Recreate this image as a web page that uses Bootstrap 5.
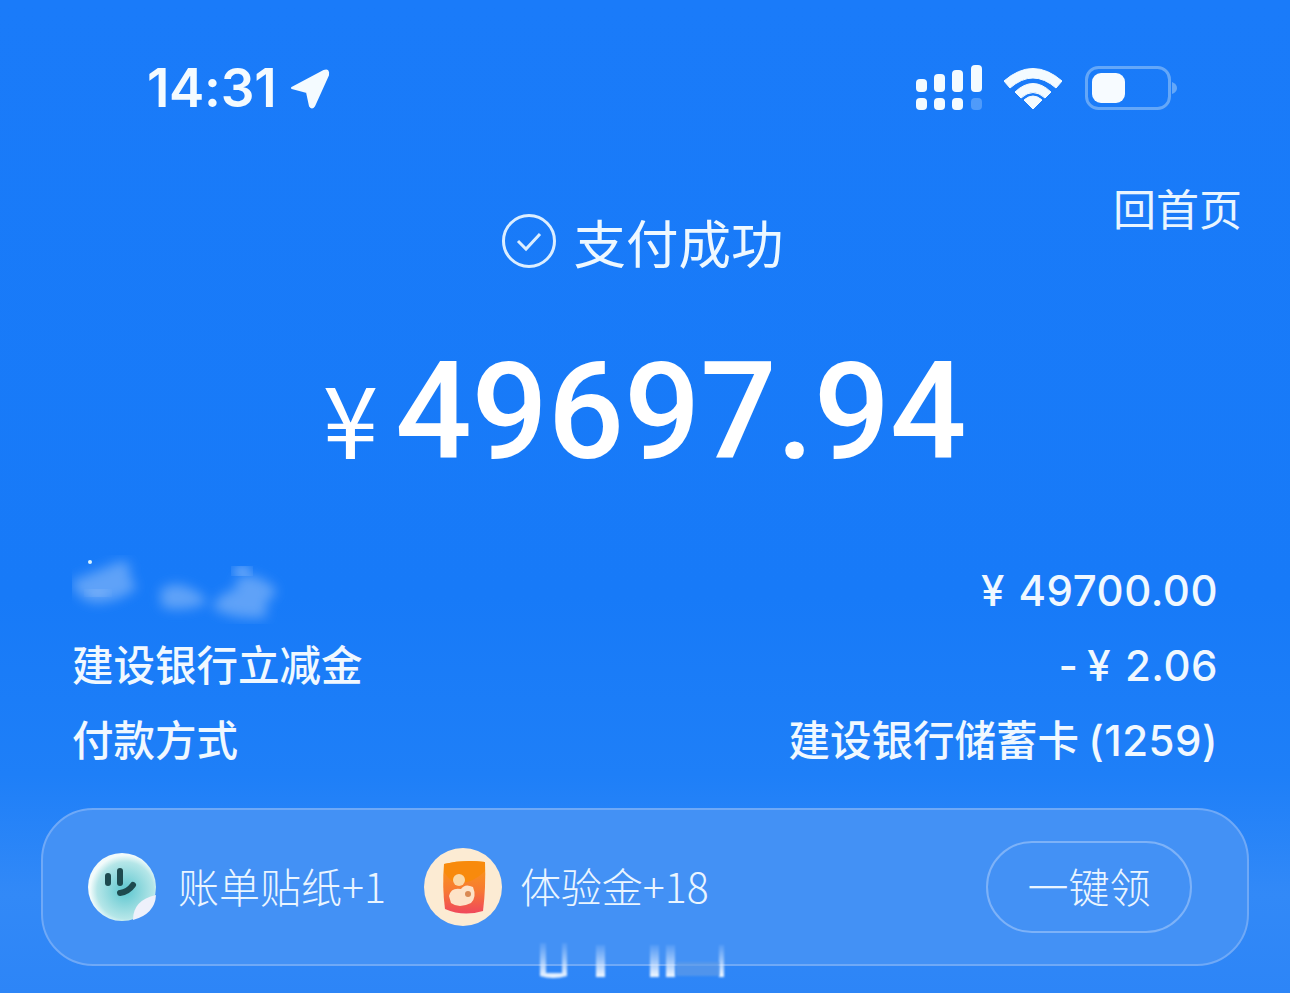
<!DOCTYPE html>
<html lang="zh-CN">
<head>
    <meta charset="UTF-8">
    <title>支付成功</title>
    <link href="https://cdn.jsdelivr.net/npm/bootstrap@5.3.0/dist/css/bootstrap.min.css" rel="stylesheet">
    <style>
        html, body { height: 100%; }
        body {
            margin: 0;
            overflow: hidden;
            color: #fff;
            font-family: "Inter", "Noto Sans CJK SC", sans-serif;
            background: linear-gradient(180deg, #1a7bf9 0%, #177af8 60%, #1e7ff8 78%, #3289f7 90%, #2d85f7 100%);
        }
        .pay-page { position: relative; width: 1290px; height: 993px; overflow: hidden; }
        .status-bar { height: 174px; padding: 61px 113px 0 147px; color: #f4fbff; }
        .clock { font-size: 53px; font-weight: 600; line-height: 54px; letter-spacing: -.3px; }
        .arrow-icon { margin-left: 3px; }
        .status-icons { margin-top: 4px; }
        .signal-icon { margin-right: 22px; }
        .wifi-icon { margin-right: 23px; }
        .head-row { height: 98px; padding-top: 35px; padding-right: 9px; }
        .head-title { font-size: 52.5px; line-height: 70px; font-family: "Noto Sans CJK SC", sans-serif; color: #eef8ff; }
        .check-icon { margin-left: 4px; }
        .home-link { position: absolute; top: 177px; right: 48px; font-size: 43px; line-height: 60px; font-family: "Noto Sans CJK SC", sans-serif; color: #e8f5ff; }
        .amount-row { height: 279px; padding-top: 70px; padding-right: 1px; }
        .yen-big { font-family: "Noto Sans CJK SC", sans-serif; font-size: 100px; font-weight: 400; line-height: 100px; margin-right: 17px; margin-top: 24px; }
        .amount { font-family: "Roboto", sans-serif; font-weight: 500; font-size: 134.5px; line-height: 140px; letter-spacing: -.2px; }
        .detail-list { padding: 0 72px 0 72px; }
        .detail-row { height: 75px; font-size: 41.5px; font-weight: 500; line-height: 75px; font-family: "Noto Sans CJK SC", sans-serif; color: #f0f8ff; }
        .detail-num { font-family: "Inter", "Noto Sans CJK SC", sans-serif; font-size: 42px; letter-spacing: .5px; word-spacing: 2px; }
        .num-cell { padding-top: 2px; }
        .minus-gap { margin-left: 9px; }
        .name-blur { width: 340px; height: 75px; }
        .reward-card {
            margin: 32px 41px 0;
            height: 158px;
            padding: 0 55px 0 44px;
            border: 2px solid #6fa9f7;
            border-radius: 52px;
            background: #4391f5;
            font-family: "Noto Sans CJK SC", sans-serif;
            font-size: 41px;
            font-weight: 300;
            color: #eaf5ff;
        }
        .reward-item { line-height: 60px; }
        .reward-item span { padding-bottom: 4px; }
        .reward-two { margin-left: 37px; gap: 17px; }
        .reward-one { gap: 21px; }
        .claim-btn {
            width: 206px;
            height: 92px;
            border: 2px solid #7db2f8;
            border-radius: 46px;
            font-size: 41px;
            font-weight: 300;
            color: #eaf5ff;
            background: transparent;
            padding: 0 0 2px;
        }
        .smear { position: absolute; left: 535px; top: 940px; }
    </style>
</head>
<body>
<div class="pay-page">
    <div class="status-bar d-flex justify-content-between align-items-start">
        <div class="d-flex align-items-center gap-2">
            <span class="clock">14:31</span>
            <svg class="arrow-icon" width="44" height="44" viewBox="0 0 44 44">
                <path d="M5 22 L37 5 Q42 3 41 9 L27 40 Q25 43 23 40 L20 26 Z" fill="#f4fbff" stroke="#f4fbff" stroke-width="2" stroke-linejoin="round"/>
            </svg>
        </div>
        <div class="status-icons d-flex align-items-center">
            <svg class="signal-icon" width="66" height="46" viewBox="0 0 66 46">
                <g fill="#f4fbff">
                    <rect x="0" y="14" width="11" height="13" rx="4"/>
                    <rect x="18" y="9" width="11" height="18" rx="4"/>
                    <rect x="36" y="5" width="11" height="22" rx="4"/>
                    <rect x="55" y="0" width="11" height="27" rx="4"/>
                    <rect x="0" y="33" width="11" height="12" rx="4"/>
                    <rect x="18" y="33" width="11" height="12" rx="4"/>
                    <rect x="36" y="33" width="11" height="12" rx="4"/>
                    <rect x="55" y="33" width="11" height="12" rx="4" opacity=".25"/>
                </g>
            </svg>
            <svg class="wifi-icon" width="58" height="44" viewBox="0 0 58 44">
                <path d="M0 15 Q29 -10 58 15 L52 22 Q29 2 6 22 Z" fill="#f4fbff" stroke="#f4fbff" stroke-linejoin="round"/>
                <path d="M11 26 Q29 9 47 26 L41 32 Q29 21 17 32 Z" fill="#f4fbff" stroke="#f4fbff" stroke-linejoin="round"/>
                <path d="M20 34 Q29 26 38 34 L29 43 Z" fill="#f4fbff" stroke="#f4fbff" stroke-linejoin="round"/>
            </svg>
            <svg width="92" height="44" viewBox="0 0 92 44">
                <rect x="1.5" y="1.5" width="83" height="41" rx="12" fill="none" stroke="#64a7f8" stroke-width="3"/>
                <rect x="7" y="7" width="33" height="30" rx="9" fill="#f7fbff"/>
                <path d="M87 16 Q92 18 92 22 Q92 26 87 28 Z" fill="#64a7f8"/>
            </svg>
        </div>
    </div>

    <a class="home-link text-decoration-none" href="#">回首页</a>

    <div class="head-row d-flex justify-content-center align-items-center gap-3">
        <svg class="check-icon" width="56" height="56" viewBox="0 0 56 56">
            <circle cx="28" cy="28" r="25.5" fill="none" stroke="#dceeff" stroke-width="3"/>
            <path d="M17 28 L25 36 L39 21" fill="none" stroke="#dceeff" stroke-width="3"/>
        </svg>
        <span class="head-title">支付成功</span>
    </div>

    <div class="amount-row d-flex justify-content-center align-items-start">
        <span class="yen-big">¥</span>
        <span class="amount">49697.94</span>
    </div>

    <div class="detail-list">
        <div class="detail-row d-flex justify-content-between">
            <svg class="name-blur" viewBox="0 0 340 75">
                <defs><filter id="smudge"><feGaussianBlur stdDeviation="6"/></filter></defs>
                <g fill="#5fa2f8" filter="url(#smudge)">
                    <path d="M0 30 Q20 22 35 16 Q52 6 58 14 Q55 26 65 36 Q50 50 25 52 Q5 50 0 30 Z"/>
                    <path d="M88 40 Q100 28 120 38 Q135 46 134 52 Q110 62 90 56 Z"/>
                    <path d="M140 56 Q150 40 165 38 Q160 24 178 24 Q200 30 205 42 Q190 50 195 66 Q160 70 140 56 Z"/>
                </g>
                <circle cx="18" cy="11" r="2" fill="#d8f2ff"/>
                <ellipse cx="26" cy="42" rx="11" ry="3" fill="#8fbdf9" filter="url(#smudge)"/>
                <ellipse cx="170" cy="20" rx="9" ry="4" fill="#9cc5fa" filter="url(#smudge)"/>
            </svg>
            <span class="detail-num num-cell">¥ 49700.00</span>
        </div>
        <div class="detail-row d-flex justify-content-between">
            <span>建设银行立减金</span>
            <span class="detail-num num-cell">-<span class="minus-gap">¥ 2.06</span></span>
        </div>
        <div class="detail-row d-flex justify-content-between">
            <span>付款方式</span>
            <span>建设银行储蓄卡 <span class="detail-num">(1259)</span></span>
        </div>
    </div>

    <div class="reward-card d-flex align-items-center">
        <div class="reward-item reward-one d-flex align-items-center">
            <svg width="70" height="70" viewBox="0 0 70 70">
                <defs>
                    <radialGradient id="faceFill" cx="55%" cy="55%" r="52%">
                        <stop offset="0" stop-color="#5cc6cf"/>
                        <stop offset=".8" stop-color="#b5e6e8"/>
                        <stop offset="1" stop-color="#f2fbfb"/>
                    </radialGradient>
                </defs>
                <circle cx="35" cy="35" r="34" fill="url(#faceFill)"/>
                <g fill="none" stroke="#1e4a4f" stroke-width="6" stroke-linecap="round">
                    <path d="M21 24 V31"/>
                    <path d="M33 19 V31"/>
                    <path d="M33 41 Q41 40 46 33"/>
                </g>
                <path d="M46 68 Q46 48 69 43 Q68 62 46 68 Z" fill="#eef1fb"/>
            </svg>
            <span>账单贴纸+1</span>
        </div>
        <div class="reward-item reward-two d-flex align-items-center">
            <svg width="80" height="80" viewBox="0 0 80 80">
                <defs>
                    <linearGradient id="bagFill" x1="0" y1="0" x2="0" y2="1">
                        <stop offset="0" stop-color="#fa9c12"/>
                        <stop offset=".55" stop-color="#f77a32"/>
                        <stop offset="1" stop-color="#f0475c"/>
                    </linearGradient>
                </defs>
                <circle cx="40" cy="40" r="39" fill="#fcebd3"/>
                <path d="M21 17 Q40 12 62 15 Q63 40 60 64 Q40 70 22 62 Q19 40 21 17 Z" fill="url(#bagFill)"/>
                <path d="M21 25 Q30 38 37 36 Q50 36 62 24 L62 15 Q40 12 21 17 Z" fill="#f88a0c"/>
                <circle cx="36" cy="33" r="6" fill="#fbd9a6"/>
                <path d="M26 49 Q28 40 38 42 Q42 36 50 40 Q54 50 48 56 Q36 62 28 56 Z" fill="#fde3c8"/>
                <circle cx="45" cy="47" r="3" fill="#d98a55"/>
            </svg>
            <span>体验金+18</span>
        </div>
        <button type="button" class="btn claim-btn ms-auto">一键领</button>
    </div>

    <svg class="smear" width="230" height="44" viewBox="0 0 230 44">
        <defs>
            <filter id="smearBlur"><feGaussianBlur stdDeviation="1.2"/></filter>
            <linearGradient id="smearFade" x1="0" y1="0" x2="0" y2="1">
                <stop offset="0" stop-color="#dcebff" stop-opacity=".1"/>
                <stop offset="1" stop-color="#f5faff"/>
            </linearGradient>
        </defs>
        <g filter="url(#smearBlur)" fill="url(#smearFade)">
            <path d="M5 3 H11 V33 H27 V3 H32 V36 Q18 40 5 36 Z"/>
            <rect x="61" y="5" width="9" height="32"/>
            <rect x="115" y="5" width="9" height="32"/>
            <rect x="131" y="5" width="9" height="32"/>
            <rect x="184" y="5" width="5" height="32"/>
        </g>
        <rect x="141" y="22" width="43" height="14" fill="#5f9be8" opacity=".7" filter="url(#smearBlur)"/>
    </svg>
</div>
<script src="https://cdn.jsdelivr.net/npm/bootstrap@5.3.0/dist/js/bootstrap.bundle.min.js"></script>
</body>
</html>
